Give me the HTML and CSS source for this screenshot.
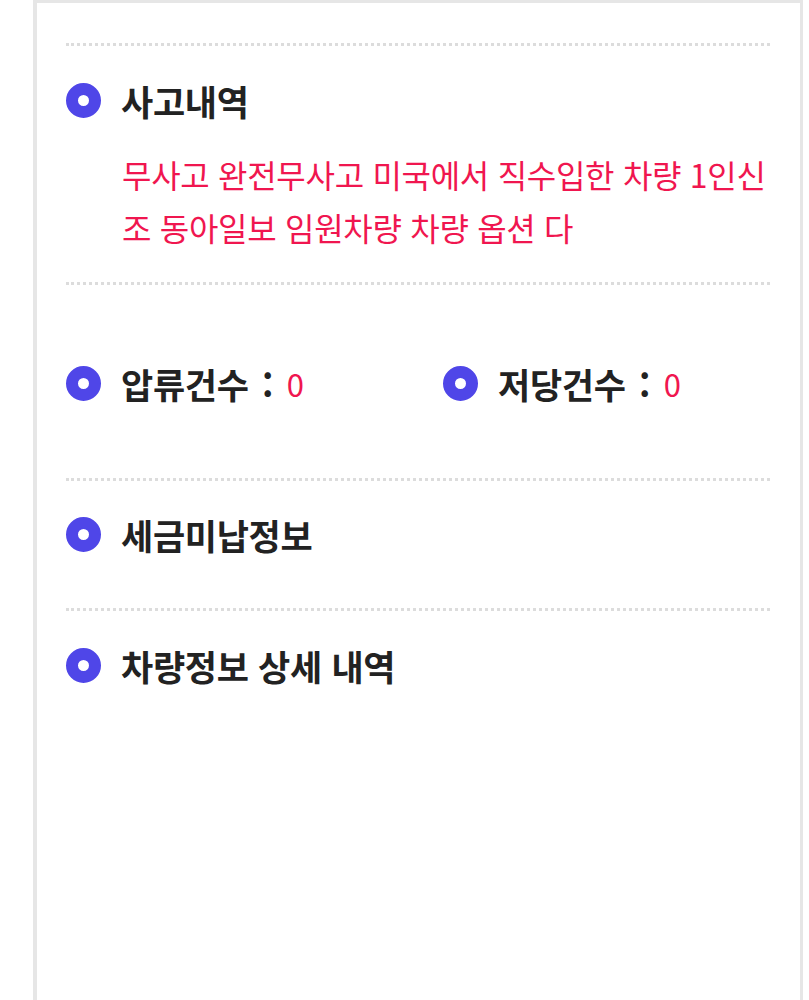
FILE: index.html
```html
<!DOCTYPE html>
<html lang="ko">
<head>
    <meta charset="UTF-8" />
    <meta name="viewport" content="width=device-width, initial-scale=1.0" />
    <title>차량 이력</title>
    <link rel="stylesheet" href="styles.css">
</head>
<body>
    <div class="panel">
        <div class="section section-accident">
            <h2 class="item-title"><span class="dot"></span>사고내역</h2>
            <p class="item-desc">무사고 완전무사고 미국에서 직수입한 차량 1인신조 동아일보 임원차량 차량 옵션 다</p>
        </div>
        <div class="section section-count">
            <div class="count-row">
                <h2 class="item-title"><span class="dot"></span>압류건수 :&nbsp;<span class="count">0</span></h2>
                <h2 class="item-title"><span class="dot"></span>저당건수 :&nbsp;<span class="count">0</span></h2>
            </div>
        </div>
        <div class="section section-tax">
            <h2 class="item-title"><span class="dot"></span>세금미납정보</h2>
        </div>
        <div class="section section-detail">
            <h2 class="item-title"><span class="dot"></span>차량정보 상세 내역</h2>
        </div>
    </div>
</body>
</html>
```

FILE: styles.css
```css
body {
    font-family: "Noto Sans CJK KR", "Noto Sans", sans-serif;
    background-color: #ffffff;
    margin: 0;
    padding: 0;
}

.panel {
    margin-left: 33px;
    width: 704px;
    min-height: 1100px;
    padding: 40px 30px 0 29px;
    border-top: 3px solid #e6e6e6;
    border-left: 4px solid #e6e6e6;
    border-right: 3px solid #e6e6e6;
}

.section {
    border-top: 3px dotted #dcdcdc;
}

.section-accident {
    padding: 34px 0 28px;
}

.section-count {
    padding: 78px 0 75px;
}

.section-tax {
    padding: 33px 0 54px;
}

.section-detail {
    padding: 34px 0 0;
}

.item-title {
    display: flex;
    align-items: center;
    margin: 0;
    height: 40px;
    font-size: 35px;
    font-weight: 700;
    color: #222222;
    letter-spacing: -0.3px;
}

.dot {
    width: 11px;
    height: 11px;
    border: 12.5px solid #4f46e8;
    border-radius: 50%;
    margin-right: 20px;
    flex-shrink: 0;
}

.count {
    font-size: 31px;
    font-weight: 400;
    color: #f0164f;
    letter-spacing: 0;
}

.item-desc {
    margin: 28px 0 0 56px;
    font-size: 32px;
    line-height: 53px;
    color: #f0164f;
    word-break: break-all;
    letter-spacing: -0.3px;
}

.count-row {
    display: grid;
    grid-template-columns: 377px 1fr;
}

.count-row .item-title {
    word-spacing: 4px;
}
```
